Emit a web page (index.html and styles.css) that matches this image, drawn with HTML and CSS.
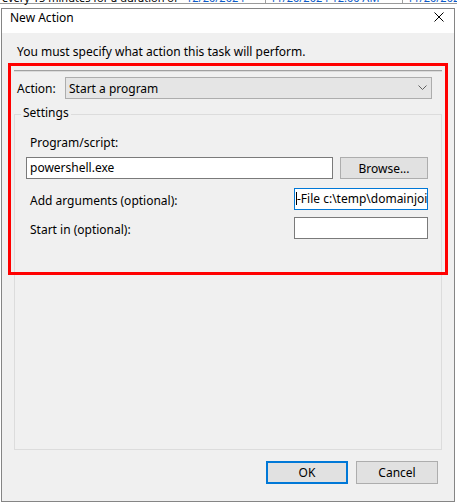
FILE: index.html
```html
<!DOCTYPE html>
<html>
    <head>
        <meta name="viewport" content="width=device-width">
        <title>New Action</title>
        <link rel="stylesheet" href="styles.css">
    </head>
    <body>
        <div class="bg-top">
            <div class="bg-row">
                <span class="bg-cell first">every 15 minutes for a duration of</span>
                <span class="bg-cell link date">12/20/2024</span>
                <span class="bg-cell link sep time">11/20/2024 12:00 AM</span>
                <span class="bg-cell link sep">11/20/2024</span>
            </div>
        </div>

        <div class="dialog">
            <div class="titlebar">
                <span class="title">New Action</span>
                <svg class="close" width="10" height="10" viewBox="0 0 10 10">
                    <path d="M0.5 0.5 L9.5 9.5 M9.5 0.5 L0.5 9.5" stroke="#000" stroke-width="1" fill="none"/>
                </svg>
            </div>

            <div class="dlg-body">
                <div class="intro">You must specify what action this task will perform.</div>

                <div class="panel">
                    <div class="action-row">
                        <span class="action-label">Action:</span>
                        <div class="combo">
                            <span>Start a program</span>
                            <svg class="chevron" width="9" height="6" viewBox="0 0 9 6">
                                <path d="M0.5 0.5 L4.5 4.5 L8.5 0.5" stroke="#606060" stroke-width="1" fill="none"/>
                            </svg>
                        </div>
                    </div>

                    <fieldset class="group">
                        <legend>Settings</legend>
                        <div class="group-inner">
                            <div class="field-label">Program/script:</div>
                            <div class="prog-row">
                                <div class="textbox wide">powershell.exe</div>
                                <button class="btn browse">Browse...</button>
                            </div>
                            <div class="opt-row first">
                                <span class="field-label">Add arguments (optional):</span>
                                <div class="textbox small focus"><span class="caret"></span>-File c:\temp\domainjoin.ps1</div>
                            </div>
                            <div class="opt-row">
                                <span class="field-label">Start in (optional):</span>
                                <div class="textbox small"></div>
                            </div>
                        </div>
                    </fieldset>
                </div>

                <div class="actions">
                    <button class="btn default">OK</button>
                    <button class="btn">Cancel</button>
                </div>
            </div>

            <div class="highlight"></div>
        </div>
    </body>
</html>
```

FILE: styles.css
```css
body{
    margin:0;
    background:#fff;
    font-family:"Segoe UI","Noto Sans",sans-serif;
    font-size:12px;
    line-height:15px;
    color:#000;
}

/* window behind the dialog */
.bg-top{height:8px;overflow:hidden;white-space:nowrap;font-size:11px}
.bg-row{display:flex;margin-top:-10px;padding-left:2px;border-bottom:1px solid #9a9a9a}
.bg-cell{height:13px;flex:none}
.bg-cell.first{width:184px}
.bg-cell.link{color:#0a5ac8}
.bg-cell.date{width:79px}
.bg-cell.time{width:132px}
.bg-cell.sep{border-left:1px solid #a0a0a0;padding-left:4px}

.dialog
{
    position:relative;
    box-sizing:border-box;
    width:454px;
    height:494px;
    margin-left:1px;
    border:1px solid #858585;
    background:#f0f0f0;
    display:flex;
    flex-direction:column;
}
.titlebar
{
    box-sizing:border-box;
    height:24px;
    background:#fff;
    display:flex;
    justify-content:space-between;
    align-items:flex-start;
    padding:1px 10px 0 8px;
}
.close{margin-top:2px}

.dlg-body
{
    flex:1;
    display:flex;
    flex-direction:column;
    padding:0 12px;
}
.intro{margin-top:11px;padding-left:3px}

.panel
{
    flex:1;
    display:flex;
    flex-direction:column;
    margin-top:11px;
    border-top:1px solid #a0a0a0;
    box-shadow:inset 0 1px 0 #dadada;
}
.action-row{display:flex;align-items:center;margin-top:6px}
.action-label{box-sizing:border-box;width:51px;padding-left:3px}
.combo
{
    box-sizing:border-box;
    width:367px;
    height:22px;
    border:1px solid #adadad;
    background:#e5e5e5;
    display:flex;
    align-items:center;
    padding:0 4px 0 3px;
}
.chevron{margin-left:auto}

.group
{
    flex:1;
    min-width:0;
    margin:6px 0 0;
    padding:0;
    border:1px solid #dcdcdc;
}
.group legend{margin-left:6px;padding:0 2px 4px}
.group-inner{padding:11px 13px 0 11px}
.field-label{padding-left:4px}

.prog-row{display:flex;gap:7px;margin-top:7px}
.opt-row{display:flex;justify-content:space-between;align-items:center;margin-top:7px}
.opt-row.first{margin-top:9px}
.opt-row .field-label{padding-top:2px}

.textbox
{
    box-sizing:border-box;
    height:22px;
    border:1px solid #7a7a7a;
    background:#fff;
    padding:2px 3px 0;
    white-space:nowrap;
    overflow:hidden;
}
.textbox.wide{flex:1}
.textbox.small{width:134px}
.textbox.focus{border-color:#0078d7;padding-left:1px}
.caret{display:inline-block;width:1px;height:13px;background:#000;vertical-align:-2px}

.btn
{
    box-sizing:border-box;
    height:23px;
    border:1px solid #adadad;
    background:#e1e1e1;
    font:inherit;
    color:#000;
    padding:0;
}
.btn.browse{width:88px;height:22px}
.btn.default{border:2px solid #0078d7}

.actions
{
    display:flex;
    justify-content:flex-end;
    gap:8px;
    margin:11px 4px 17px 0;
}
.actions .btn{width:82px}

/* annotation box drawn over the form */
.highlight
{
    position:absolute;
    left:6px;
    top:54px;
    box-sizing:border-box;
    width:440px;
    height:212px;
    border:3px solid #f00;
    pointer-events:none;
}
```
